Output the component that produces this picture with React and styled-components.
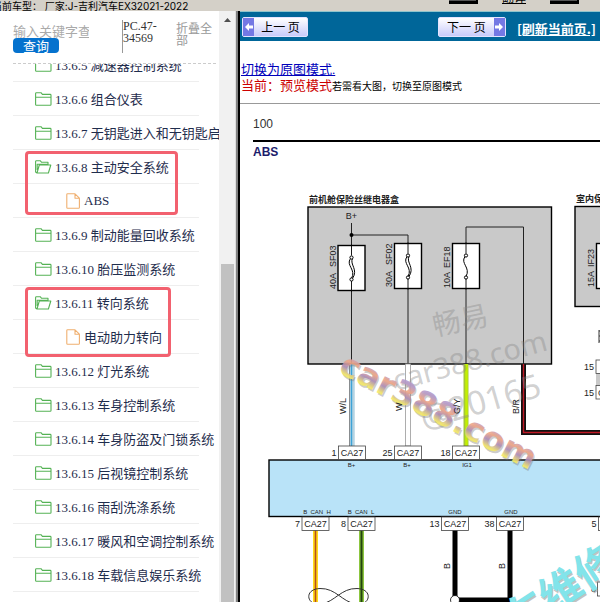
import React, { useState } from 'react';
import styled, { createGlobalStyle } from 'styled-components';

const GlobalStyle = createGlobalStyle`
    * {
        box-sizing: border-box;
    }
    body {
        margin: 0;
        background-color: white;
    }
`

const Page = styled.div`
    display: flex;
    flex-flow: column;
    height: 100vh;
    overflow: hidden;
    font-family: "Liberation Serif", "Noto Sans CJK SC", serif;
    font-size: 13px;
    color: #1f2d3d;
`

const TopBar = styled.header`
    display: flex;
    justify-content: space-between;
    align-items: flex-start;
    flex: none;
    height: 11px;
    overflow: hidden;
    background-color: #d4d0c8;
`

const CarModel = styled.div`
    font-family: Inter, "Noto Sans CJK SC", sans-serif;
    font-size: 10px;
    line-height: 12px;
    text-indent: -8px;
    color: black;
    white-space: pre;
`

const TopTools = styled.div`
    display: flex;
    align-items: flex-end;
    gap: 20px;
    height: 4px;
    padding-right: 21px;
`

const ToolButton = styled.button`
    flex: none;
    width: 29px;
    height: 20px;
    padding: 0;
    border: 0 solid black;
    border-bottom-width: 3px;
    border-right-width: 2px;
    background-color: #555;
`

const TranslateLink = styled.a`
    width: 32px;
    text-align: center;
    font-family: "Noto Sans CJK SC", sans-serif;
    font-size: 12px;
    line-height: 14px;
    color: black;
`

const Columns = styled.div`
    display: flex;
    flex: 1;
    min-height: 0;
`

const Sidebar = styled.aside`
    display: flex;
    flex: none;
    width: 240px;
    border-right: 2px solid black;
`

const TreePane = styled.div`
    display: flex;
    flex-flow: column;
    flex: 1;
    min-width: 0;
    padding-left: 13px;
    overflow: hidden;
`

const SearchForm = styled.form`
    display: flex;
    align-items: flex-start;
    flex: none;
    height: 53px;
    margin-right: 3px;
    padding-top: 9px;
    border-bottom: 1px dashed #ccc;
    font-size: 12px;
    line-height: 12px;
`

const SearchFields = styled.div`
    display: flex;
    flex-flow: column;
    align-items: flex-start;
    width: 109px;
    padding-top: 3px;
`

const SearchInput = styled.input`
    width: 76px;
    height: 15px;
    padding: 0;
    border: none;
    outline: none;
    background: none;
    font-family: "Noto Sans CJK SC", sans-serif;
    font-size: 13px;
    &::placeholder {
        color: #aaa;
    }
`

const SearchButton = styled.button`
    width: 46px;
    height: 15px;
    padding: 0;
    border: none;
    border-radius: 4px;
    background-color: #0572ce;
    color: white;
    font-family: "Noto Sans CJK SC", sans-serif;
    font-size: 13px;
    line-height: 15px;
`

const UserCode = styled.div`
    width: 54px;
    height: 33px;
    border-left: 1px solid #999;
    color: #333;
`

const CollapseButton = styled.button`
    width: 38px;
    padding: 2px 0 0;
    border: none;
    background: none;
    text-align: left;
    font-family: "Noto Sans CJK SC", sans-serif;
    font-size: 12px;
    line-height: 12px;
    color: #999;
`

const Tree = styled.div`
    flex: 1;
    min-height: 0;
    overflow: hidden;
`

/* scrolled part of the tree */
const TreeList = styled.ul`
    margin: -16px 0 0;
    padding: 0;
    list-style-type: none;
`

const TreeGroup = styled.li`
    position: relative;
`

const Mark = styled.span`
    position: absolute;
    top: 1px;
    left: 12px;
    width: ${props => props.$width}px;
    height: ${props => props.$height}px;
    border: 3px solid #f2616f;
    border-radius: 4px;
    pointer-events: none;
`

const TreeRow = styled.a`
    display: flex;
    align-items: center;
    gap: 3px;
    width: 186px;
    height: 34px;
    padding-left: ${props => props.$deep ? 53 : 22}px;
    border-bottom: 1px solid #eee;
    color: #1f2d4d;
    text-decoration: none;
    white-space: nowrap;
    svg {
        flex: none;
    }
`

const ScrollTrack = styled.div`
    display: flex;
    flex-flow: column;
    flex: none;
    width: 16px;
    padding: 0 1px 0 2px;
    background-color: #f1f1f1;
`

const ScrollArrow = styled.div`
    display: flex;
    justify-content: center;
    align-items: center;
    height: 18px;
`

const ScrollSpace = styled.div`
    flex: 235;
`

const ScrollThumb = styled.div`
    flex: 338;
    background-color: #c1c1c1;
`

const Splitter = styled.div`
    flex: none;
    width: 3px;
    border-left: 1px solid #ddd;
    background-color: #808080;
`

const Main = styled.main`
    display: flex;
    flex-flow: column;
    flex: 1;
    min-width: 0;
    background-color: white;
`

const PagerBar = styled.nav`
    display: flex;
    align-items: center;
    gap: 11px;
    flex: none;
    height: 30px;
    padding: 0 4px 0 2px;
    background-color: #006699;
    border-top: 1px solid #8fc4cc;
`

const PagerButton = styled.button`
    display: flex;
    align-items: center;
    flex-direction: ${props => props.$next ? 'row-reverse' : 'row'};
    width: ${props => props.$next ? 68 : 66}px;
    height: 20px;
    margin-left: ${props => props.$next ? 'auto' : 0};
    padding: 0;
    border: 1px solid #e4e4ff;
    border-radius: 2px;
    background: linear-gradient(#fff, #c9cbfa);
    color: black;
    font-family: "Noto Sans CJK SC", sans-serif;
    font-size: 12px;
    line-height: 18px;
`

const ArrowBox = styled.span`
    display: flex;
    justify-content: center;
    align-items: center;
    width: 11px;
    height: 18px;
    background-color: #7478e4;
`

const PagerText = styled.span`
    flex: 1;
    text-align: center;
`

const RefreshLink = styled.a`
    color: white;
    font-family: "Noto Sans CJK SC", sans-serif;
    font-size: 13px;
    line-height: 16px;
    font-weight: bold;
    padding-top: 4px;
    white-space: nowrap;
`

const ModeInfo = styled.div`
    flex: none;
    height: 63px;
    padding: 21px 0 8px 1px;
    border-bottom: 1px solid #999;
    p {
        margin: 0;
        line-height: 16px;
    }
    a {
        color: #0000bb;
    }
`

const CurrentMode = styled.span`
    color: #cc0000;
`

const ModeHint = styled.small`
    font-size: 10px;
    color: black;
`

const Sheet = styled.article`
    flex: 1;
    min-height: 0;
    overflow: hidden;
    font-family: "Liberation Sans", "Noto Sans CJK SC", sans-serif;
`

const SheetNumber = styled.div`
    height: 38px;
    margin-left: 13px;
    padding-top: 12px;
    border-bottom: 2px solid black;
    font-size: 12px;
    line-height: 16px;
    color: #333;
`

const SheetTitle = styled.h2`
    margin: 0 0 0 13px;
    padding-top: 2px;
    font-size: 12px;
    line-height: 16px;
    color: #1c1c6c;
`

const Schematic = styled.svg`
    display: block;
    overflow: visible;
    font-family: "Liberation Sans", "Noto Sans CJK SC", sans-serif;
    font-size: 9px;
    fill: #222;
    text {
        white-space: pre;
    }
`

const rows = [
  { title: '13.6.5 减速器控制系统' },
  { title: '13.6.6 组合仪表' },
  { title: '13.6.7 无钥匙进入和无钥匙启动' },
  { title: '13.6.8 主动安全系统', child: 'ABS', mark: [153, 64] },
  { title: '13.6.9 制动能量回收系统' },
  { title: '13.6.10 胎压监测系统' },
  { title: '13.6.11 转向系统', child: '电动助力转向', mark: [146, 70] },
  { title: '13.6.12 灯光系统' },
  { title: '13.6.13 车身控制系统' },
  { title: '13.6.14 车身防盗及门锁系统' },
  { title: '13.6.15 后视镜控制系统' },
  { title: '13.6.16 雨刮洗涤系统' },
  { title: '13.6.17 暖风和空调控制系统' },
  { title: '13.6.18 车载信息娱乐系统' },
  { title: '13.6.19 网络系统' },
]

function FolderIcon({ open }) {
  return (
    <svg width="17" height="14" viewBox="0 0 17 14" fill="none" stroke="#55b255" strokeWidth="1.1" strokeLinejoin="round">
      {open
        ? <path d="M2 13 L.6 12 V1.5 Q.6 .7 1.4 .7 H5.2 L6.6 2.3 H13 V5 M2 13 L4.3 5 H15.8 L13.4 13 Z M2.2 10 V4.2 H12.5" />
        : <path d="M.6 1.5 Q.6 .7 1.4 .7 H6 L7.4 2.4 H15.2 Q16 2.4 16 3.2 V12.4 Q16 13.2 15.2 13.2 H1.4 Q.6 13.2 .6 12.4 Z M.6 5.2 H16" />}
    </svg>
  )
}

function FileIcon() {
  return (
    <svg width="15" height="16" viewBox="0 0 15 16" fill="none" stroke="#f0b070" strokeWidth="1.1" strokeLinejoin="round">
      <path d="M1.5 .8 H9 L13.4 5.2 V14.4 Q13.4 15.2 12.6 15.2 H1.5 Q.8 15.2 .8 14.4 V1.5 Q.8 .8 1.5 .8 Z M9 .8 V5.2 H13.4" />
    </svg>
  )
}

function ArrowIcon({ next }) {
  return (
    <svg width="8" height="8" viewBox="0 0 8 8" fill="white">
      <path d={next ? 'M8 4 L4 0 V2.5 H0 V5.5 H4 V8 Z' : 'M0 4 L4 0 V2.5 H8 V5.5 H4 V8 Z'} />
    </svg>
  )
}

function Fuse({ x, y, double }) {
  return (
    <g stroke="black" fill="none">
      <rect x={x - 13.5} y={y} width="27" height="45" fill="white" strokeWidth="1.4" />
      <path d={`M${x} ${y - 1} V${y + 10} M${x} ${y + 35} V${y + 46}`} strokeWidth=".9" />
      <path d={`M${x - 1} ${y + 13} C${x - 6} ${y + 20} ${x + 5} ${y + 24} ${x} ${y + 33}`} />
      {double && <path d={`M${x + 1} ${y + 13} C${x - 2} ${y + 19} ${x + 7} ${y + 24} ${x + 1} ${y + 33}`} />}
      <circle cx={x} cy={y + 12} r="1.6" fill="white" />
      <circle cx={x} cy={y + 34} r="1.6" fill="white" />
    </g>
  )
}

function Connector({ x, y, pin }) {
  return (
    <g>
      <rect x={x} y={y} width="27" height="13.5" fill="white" stroke="#444" strokeWidth=".8" />
      <text x={x + 13.5} y={y + 10} textAnchor="middle">CA27</text>
      <text x={x - 2} y={y + 10} textAnchor="end">{pin}</text>
    </g>
  )
}

function SideText({ x, y, children }) {
  return <text transform={`translate(${x} ${y}) rotate(-90)`}>{children}</text>
}

function WiringDiagram() {
  return (
    <Schematic width="360" height="442" viewBox="240 160 360 442" role="img" aria-label="ABS">
      <defs>
        <linearGradient id="logo" x1="0" y1="0" x2="0" y2="1">
          <stop offset=".25" stopColor="#b59ac8" />
          <stop offset=".42" stopColor="#f0a584" />
          <stop offset=".58" stopColor="#ab8cb8" />
          <stop offset=".76" stopColor="#f4e768" />
        </linearGradient>
      </defs>

      <text x="309" y="203" fontWeight="bold">前机舱保险丝继电器盒</text>
      <rect x="308" y="207" width="243.5" height="157" fill="#c9c9c9" stroke="black" strokeWidth="1.4" />
      <text x="351.5" y="219" textAnchor="middle">B+</text>
      <path d="M351.5 223 V364 M351.5 235 H408 V364 M466 364 V227 H523.5 V364" fill="none" stroke="#222" />
      <circle cx="351.5" cy="235" r="2" fill="black" />
      <Fuse x={351.5} y={245.5} double />
      <Fuse x={408} y={243.5} double />
      <Fuse x={466} y={243.5} />
      <SideText x={336} y={289}>40A</SideText>
      <SideText x={336} y={267}>SF03</SideText>
      <SideText x={392} y={287}>30A</SideText>
      <SideText x={392} y={265}>SF02</SideText>
      <SideText x={450} y={288}>10A</SideText>
      <SideText x={450} y={268}>EF18</SideText>

      <text x="576" y="202" fontWeight="bold">室内保险丝</text>
      <rect x="575" y="206.5" width="60" height="100" fill="#c9c9c9" stroke="black" strokeWidth="1.4" />
      <rect x="596.5" y="243.5" width="27" height="45" fill="white" stroke="black" strokeWidth="1.4" />
      <SideText x={594} y={287}>15A</SideText>
      <SideText x={594} y={267}>IF23</SideText>
      <path d="M599 330 V343 M599 331 H601 M599 336 H601 M599 341 H601" stroke="#333" />
      <rect x="596" y="373" width="27" height="14" fill="#c9c9c9" />
      <g fill="white" stroke="#444" strokeWidth=".8">
        <rect x="596" y="360" width="27" height="13.5" />
        <rect x="596" y="385.5" width="27" height="13.5" />
        <rect x="597.5" y="582" width="27" height="14" />
      </g>
      <text x="594" y="370" textAnchor="end">15</text>
      <text x="594" y="396" textAnchor="end">15</text>
      <text x="598" y="396">C</text>
      <text x="596" y="592" textAnchor="end">8</text>

      <path d="M352 364 V446" stroke="#b5d3e2" strokeWidth="5.5" />
      <path d="M349.5 364 V446" stroke="#777" strokeWidth=".8" />
      <path d="M351.5 364 V446" stroke="#3da3d8" strokeWidth="1.4" />
      <rect x="405.5" y="364" width="5" height="82" fill="white" stroke="#999" strokeWidth=".8" />
      <path d="M466 364 V446" stroke="#a4c639" strokeWidth="5" />
      <path d="M466.5 364 V446" stroke="#c4f000" strokeWidth="2.5" />
      <g fill="none">
        <path d="M523.5 364 V432.5 H600" stroke="#111" strokeWidth="5" />
        <path d="M523.5 364 V432.5 H600" stroke="#c01825" strokeWidth="1.4" />
      </g>

      <g fill="#888" fillOpacity=".4" fontFamily="'Noto Sans', 'Noto Sans CJK SC', sans-serif">
        <text transform="translate(435 336) rotate(-12)" fontSize="28">畅易</text>
        <text transform="translate(396 391) rotate(-15)" fontSize="29">car388.com</text>
        <text transform="translate(424 430) rotate(-16)" fontSize="33">@20165</text>
      </g>

      <rect x="269" y="460" width="340" height="56.5" fill="#b9e3f8" stroke="black" strokeWidth="1.4" />
      <Connector x={338.5} y={446} pin="1" />
      <Connector x={394.5} y={446} pin="25" />
      <Connector x={452.5} y={446} pin="18" />
      <g fontSize="6" textAnchor="middle">
        <text x="351.5" y="467">B+</text>
        <text x="407" y="467">B+</text>
        <text x="467" y="467">IG1</text>
        <text x="317" y="514">B  CAN  H</text>
        <text x="361" y="514">B  CAN  L</text>
        <text x="455" y="514">GND</text>
        <text x="511" y="514">GND</text>
      </g>

      <g strokeWidth="5" fill="none">
        <path d="M315.5 530 V602" stroke="#ffd91a" />
        <path d="M361.5 530 V602" stroke="#8cc63f" />
        <path d="M315.5 530 V602" stroke="#b8501c" strokeWidth="1.6" />
        <path d="M361.5 530 V602" stroke="#23440f" strokeWidth="2" />
        <path d="M455 530 V600 H510 V530" stroke="black" />
        <path d="M315 604 C306 601 306 589 320 588.5 C336 588 342 602 356 604 M362 604 C371 601 371 589 357 588.5 C341 588 335 602 321 604" stroke="#333" strokeWidth="1" />
      </g>
      <circle cx="455" cy="600" r="4.5" fill="white" stroke="black" strokeWidth=".8" />
      <Connector x={302} y={517} pin="7" />
      <Connector x={348} y={517} pin="8" />
      <Connector x={441.5} y={517} pin="13" />
      <Connector x={496.5} y={517} pin="38" />
      <Connector x={598.5} y={517} pin="5" />
      <SideText x={450} y={569}>B</SideText>
      <SideText x={505} y={569}>B</SideText>

      <g fontFamily="'DejaVu Sans', sans-serif" fontWeight="bold" fontSize="33">
        <text transform="translate(338 374) rotate(27)" fill="#777" fillOpacity=".4">car388.com</text>
        <text transform="translate(337 372) rotate(27)" fill="url(#logo)" fillOpacity=".9">car388.com</text>
      </g>
      <g fontFamily="'Noto Sans CJK SC', sans-serif" fontWeight="bold" fontSize="42">
        <text transform="translate(517 639) rotate(-33)" fill="#999" fillOpacity=".6">车维修</text>
        <text transform="translate(516 637) rotate(-33)" fill="#82e4ea">车维修</text>
      </g>

      <SideText x={346} y={414}>W/L</SideText>
      <SideText x={402} y={411}>W</SideText>
      <SideText x={460} y={414}>G/Y</SideText>
      <SideText x={519} y={414}>B/R</SideText>
    </Schematic>
  )
}

function App() {
  const [ keyword, setKeyword ] = useState('');

  return (
    <>
      <GlobalStyle />
      <Page>
        <TopBar>
          <CarModel>当前车型： 厂家:J-吉利汽车EX32021-2022</CarModel>
          <TopTools>
            <ToolButton type="button" aria-label="后退" />
            <TranslateLink href="#translate">翻译</TranslateLink>
            <ToolButton type="button" aria-label="前进" />
          </TopTools>
        </TopBar>
        <Columns>
          <Sidebar>
            <TreePane>
              <SearchForm onSubmit={e => e.preventDefault()}>
                <SearchFields>
                  <SearchInput
                    aria-label="关键字"
                    placeholder="输入关键字查询"
                    value={keyword}
                    onChange={e => setKeyword(e.target.value)}
                  />
                  <SearchButton type="submit">查询</SearchButton>
                </SearchFields>
                <UserCode>PC.47-<br />34569</UserCode>
                <CollapseButton type="button">折叠全部</CollapseButton>
              </SearchForm>
              <Tree>
                <TreeList>
                  {rows.map(row => (
                    <TreeGroup key={row.title}>
                      <TreeRow href="#tree">
                        <FolderIcon open={!!row.child} />
                        {row.title}
                      </TreeRow>
                      {row.child && <TreeRow href="#page" $deep><FileIcon />{row.child}</TreeRow>}
                      {row.mark && <Mark $width={row.mark[0]} $height={row.mark[1]} />}
                    </TreeGroup>
                  ))}
                </TreeList>
              </Tree>
            </TreePane>
            <ScrollTrack>
              <ScrollArrow>
                <svg width="7" height="4" viewBox="0 0 7 4" fill="#505050"><path d="M3.5 0 L7 4 H0 Z" /></svg>
              </ScrollArrow>
              <ScrollSpace />
              <ScrollThumb />
            </ScrollTrack>
            <Splitter />
          </Sidebar>
          <Main>
            <PagerBar>
              <PagerButton type="button">
                <ArrowBox><ArrowIcon /></ArrowBox>
                <PagerText>上一 页</PagerText>
              </PagerButton>
              <PagerButton type="button" $next>
                <ArrowBox><ArrowIcon next /></ArrowBox>
                <PagerText>下一 页</PagerText>
              </PagerButton>
              <RefreshLink href="#refresh">[刷新当前页.]</RefreshLink>
            </PagerBar>
            <ModeInfo>
              <p><a href="#original">切换为原图模式.</a></p>
              <p><CurrentMode>当前：预览模式</CurrentMode><ModeHint>若需看大图，切换至原图模式</ModeHint></p>
            </ModeInfo>
            <Sheet>
              <SheetNumber>100</SheetNumber>
              <SheetTitle>ABS</SheetTitle>
              <WiringDiagram />
            </Sheet>
          </Main>
        </Columns>
      </Page>
    </>
  )
}

export default App
